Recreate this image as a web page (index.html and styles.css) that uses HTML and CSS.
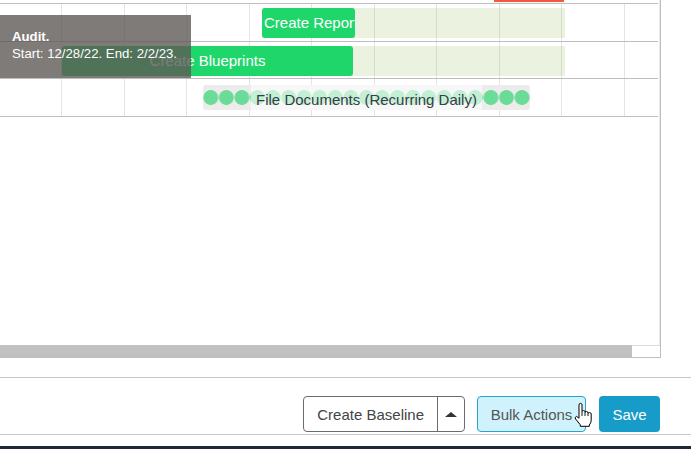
FILE: index.html
```html
<!DOCTYPE html>
<html>
<head>
<meta charset="utf-8">
<link rel="stylesheet" href="styles.css">
</head>
<body>
<div class="page">
  <div class="gantt">
    <div class="gantt-body">
      <div class="chart">
        <div class="strip"><div class="bar-red" style="left:494px;width:70px"></div></div>
        <div class="rows">
          <div class="row row-1">
            <div class="baseline" style="left:262px;width:303px"></div>
            <div class="task" style="left:262px;width:93px">Create Report</div>
          </div>
          <div class="row row-2">
            <div class="baseline" style="left:62px;width:503px"></div>
            <div class="task" style="left:62px;width:291px">Create Blueprints</div>
          </div>
          <div class="row row-3">
            <div class="recurring" style="left:203px;width:327px"><span class="rec-label">File Documents (Recurring Daily)</span></div>
          </div>
        </div>
      </div>
      <div class="vtrack"></div>
    </div>
    <div class="hscroll"><div class="hthumb"></div><div class="corner"></div></div>
  </div>
  <div class="gap"></div>
  <footer class="footer">
    <div class="btn-group">
      <div class="btn-main">Create Baseline</div>
      <div class="btn-caret"><span class="caret"></span></div>
    </div>
    <div class="btn-bulk">Bulk Actions</div>
    <div class="btn-save">Save</div>
  </footer>
  <div class="bottom-bar"></div>

  <div class="tooltip"><strong>Audit.</strong><br>Start: 12/28/22. End: 2/2/23.</div>

  <svg class="cursor" width="19" height="25" viewBox="0 0 19 25">
    <path d="M5,2.2 Q6.5,0.4 8,2.2 L8,9.3 Q9.5,7.8 11,9.3 L11,10.2 Q12.5,8.8 14,10.2 L14,11.2 Q15.6,9.8 17.2,11.4 L17.2,18 Q17.2,21 15.3,23 L15.3,24.3 L6.3,24.3 L6.3,22.8 L1.6,17 Q0.4,15 2.6,14.4 L5,16.2 Z" fill="#fff" stroke="#000" stroke-width="1" stroke-linejoin="round"/>
    <path d="M8,9.3 L8,14 M11,10.2 L11,14 M14,11.2 L14,14" stroke="#000" stroke-width="0.9" fill="none"/>
  </svg>
</div>
</body>
</html>
```

FILE: styles.css
```css
html, body {
  margin: 0;
  padding: 0;
}

body {
  font-family: "Liberation Sans", Arial, sans-serif;
  background: #ffffff;
  width: 691px;
  height: 449px;
  overflow: hidden;
}

.page {
  position: relative;
  height: 449px;
  display: flex;
  flex-direction: column;
}

.gantt {
  width: 660px;
  height: 357px;
  border-right: 1px solid #bfbfbf;
  border-bottom: 1px solid #bfbfbf;
  display: flex;
  flex-direction: column;
  flex: none;
}

.gantt-body {
  flex: 1;
  display: flex;
  min-height: 0;
}

.chart {
  width: 658px;
  overflow: hidden;
}

.vtrack {
  width: 1px;
  margin-left: 1px;
  background: #e8e8e8;
}

.strip {
  height: 3px;
  position: relative;
}

.bar-red {
  position: absolute;
  top: 0;
  height: 2px;
  background: #f2583d;
}

.rows {
  border-top: 1px solid #bdbdbd;
  background-image: repeating-linear-gradient(to right, transparent 0, transparent 61.5px, #e4e4e4 61.5px, #e4e4e4 62.5px);
}

.row {
  position: relative;
  height: 37px;
  border-bottom: 1px solid #bdbdbd;
}

.row-2 {
  height: 36px;
}

.baseline {
  position: absolute;
  top: 4px;
  height: 30px;
  background: rgba(155, 190, 100, 0.2);
}

.task {
  position: absolute;
  top: 4px;
  height: 30px;
  box-sizing: border-box;
  padding: 0 2px;
  background: #1fd66b;
  border-radius: 3px;
  color: #ffffff;
  font-size: 15px;
  line-height: 29px;
  text-align: center;
  white-space: nowrap;
  overflow: hidden;
}

.recurring {
  position: absolute;
  top: 6px;
  height: 25px;
  border-radius: 3px;
  background-color: #ececec;
  background-image: radial-gradient(circle, #6bdc98 0, #6bdc98 7px, rgba(107, 220, 152, 0) 7.8px);
  background-size: 15.57px 25px;
  background-repeat: repeat-x;
  display: flex;
  justify-content: center;
  overflow: hidden;
}

.rec-label {
  box-sizing: border-box;
  height: 25px;
  padding: 4px 5px 0;
  line-height: 21px;
  background: rgba(255, 255, 255, 0.58);
  font-size: 15px;
  color: #383c48;
  white-space: nowrap;
}

.hscroll {
  height: 12px;
  display: flex;
  flex: none;
}

.hthumb {
  width: 632px;
  background: #c1c1c1;
}

.corner {
  flex: 1;
  box-sizing: border-box;
  border-top: 1px solid #dcdcdc;
}

.gap {
  height: 19px;
  flex: none;
}

.footer {
  display: flex;
  justify-content: flex-end;
  align-items: flex-start;
  padding: 18px 31px 2px 0;
  border-top: 1px solid #c6c6c6;
  border-bottom: 1px solid #c6c6c6;
  flex: none;
}

.btn-group {
  display: flex;
  height: 36px;
  box-sizing: border-box;
  border: 1px solid #6b6b6b;
  border-radius: 4px;
}

.btn-main {
  display: flex;
  align-items: center;
  padding: 0 13px;
  font-size: 15px;
  color: #444444;
}

.btn-caret {
  width: 26px;
  border-left: 1px solid #6b6b6b;
  display: flex;
  align-items: center;
  justify-content: center;
}

.caret {
  width: 0;
  height: 0;
  border-left: 6px solid transparent;
  border-right: 6px solid transparent;
  border-bottom: 5px solid #333333;
}

.btn-bulk {
  margin-left: 12px;
  width: 109px;
  height: 36px;
  box-sizing: border-box;
  border: 1px solid #27a3d2;
  border-radius: 4px;
  background: #d0f2fc;
  color: #555555;
  font-size: 15px;
  display: flex;
  align-items: center;
  justify-content: center;
}

.btn-save {
  margin-left: 13px;
  width: 61px;
  height: 36px;
  border-radius: 4px;
  background: #179bc8;
  color: #ffffff;
  font-size: 15px;
  display: flex;
  align-items: center;
  justify-content: center;
}

.bottom-bar {
  margin-top: auto;
  height: 3px;
  background: #1e2935;
}

.tooltip {
  position: absolute;
  left: 0;
  top: 15px;
  width: 191px;
  height: 63px;
  box-sizing: border-box;
  padding: 13px 12px 0;
  background: rgba(93, 87, 85, 0.79);
  color: #ffffff;
  font-size: 13.2px;
  line-height: 17px;
  white-space: nowrap;
}

.cursor {
  position: absolute;
  left: 574px;
  top: 402px;
}
```
